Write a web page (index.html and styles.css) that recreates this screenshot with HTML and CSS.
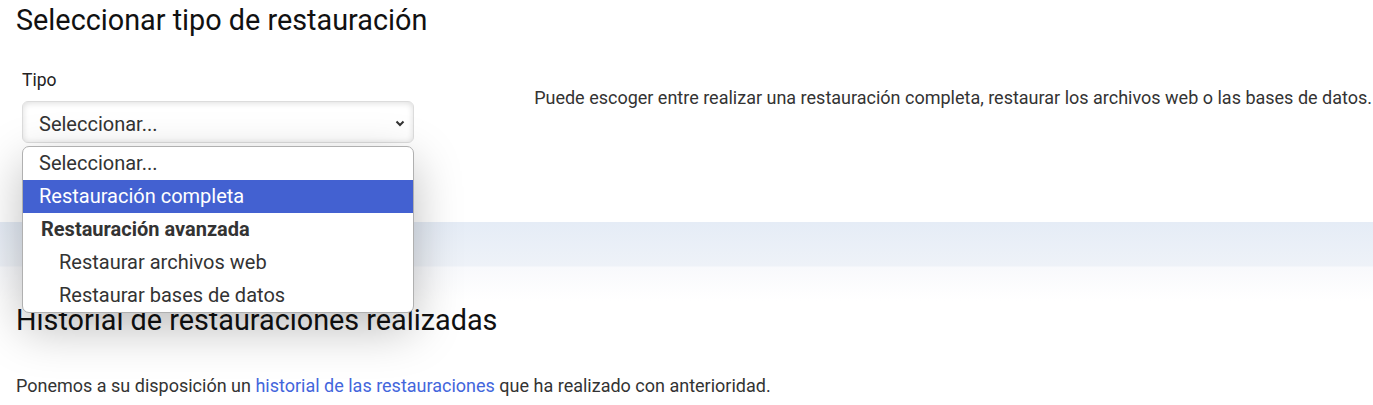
FILE: index.html
```html
<!DOCTYPE html>
<html lang="es">
<head>
  <meta charset="UTF-8" />
  <title>Restauración</title>
  <link rel="stylesheet" href="styles.css">
</head>
<body>
  <h2 class="title">Seleccionar tipo de restauración</h2>

  <div class="restore-row">
    <div class="field">
      <label class="field-label">Tipo</label>
      <div class="select-box">
        <span>Seleccionar...</span>
        <svg class="chevron" width="10" height="7" viewBox="0 0 10 7"><path d="M1.5 1.5 L5 5 L8.5 1.5" fill="none" stroke="#333" stroke-width="2"/></svg>
      </div>
      <div class="select-list">
        <div class="opt">Seleccionar...</div>
        <div class="opt selected">Restauración completa</div>
        <div class="opt opt-group">Restauración avanzada</div>
        <div class="opt sub">Restaurar archivos web</div>
        <div class="opt sub">Restaurar bases de datos</div>
      </div>
    </div>
    <p class="help">Puede escoger entre realizar una restauración completa, restaurar los archivos web o las bases de datos.</p>
  </div>

  <div class="band"></div>

  <div class="history">
    <h2 class="title">Historial de restauraciones realizadas</h2>
    <p class="history-text">Ponemos a su disposición un <a href="#">historial de las restauraciones</a> que ha realizado con anterioridad.</p>
  </div>
</body>
</html>
```

FILE: styles.css
```css
body {
  margin: 0;
  font-family: Roboto, "Liberation Sans", sans-serif;
  color: #333;
  background-color: #fff;
}

.title {
  font-size: 28.8px;
  font-weight: 400;
  color: #111;
  margin: 0;
  padding: 2px 16px 0;
  line-height: 36px;
}

.restore-row {
  display: flex;
  justify-content: space-between;
  padding: 32px 1px 0 22px;
  height: 184px;
  box-sizing: border-box;
}

.field {
  position: relative;
  width: 392px;
}

.field-label {
  display: block;
  font-size: 17.5px;
  line-height: 20px;
  color: #222;
  margin-bottom: 11px;
}

.select-box {
  height: 42px;
  box-sizing: border-box;
  border: 1px solid #dcdcdc;
  border-radius: 6px;
  box-shadow: inset 0 1px 6px rgba(0,0,0,0.14);
  display: flex;
  align-items: center;
  justify-content: space-between;
  padding: 3px 8px 0 16px;
  font-size: 20px;
  color: #333;
}

.select-list {
  position: absolute;
  top: 76px;
  left: 0;
  width: 392px;
  box-sizing: border-box;
  background-color: #fff;
  border: 1px solid #b0b0b0;
  border-radius: 7px;
  box-shadow: 0 16px 48px rgba(0,0,0,0.26);
  overflow: hidden;
  z-index: 2;
}

.opt {
  font-size: 20px;
  line-height: 33px;
  height: 33px;
  padding-left: 16px;
  color: #333;
}

.opt.selected {
  background-color: #4361d1;
  color: #fff;
}

.opt.opt-group {
  font-weight: 700;
  padding-left: 18px;
}

.opt.sub {
  padding-left: 36px;
}

.help {
  margin: 17px 0 0;
  font-size: 18px;
  color: #333;
}

.band {
  height: 79px;
  background: linear-gradient(#e5ecf6 0, #eef2f8 44px, #f8f9fc 45px, #fff 79px);
}

.history .title {
  padding-top: 1px;
}

.history-text {
  margin: 37px 16px 0;
  font-size: 18px;
}

.history-text a {
  color: #4366dc;
  text-decoration: none;
}
```
